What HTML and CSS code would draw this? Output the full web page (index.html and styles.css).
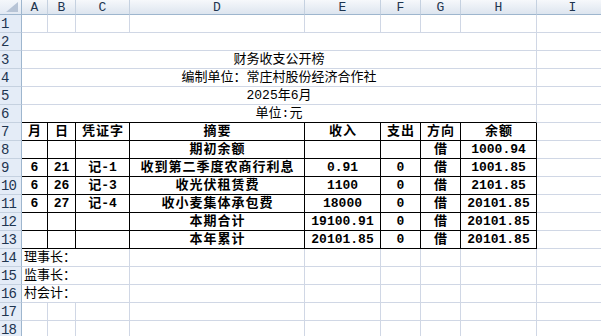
FILE: index.html
```html
<!DOCTYPE html>
<html lang="zh-CN">
<head>
<meta charset="utf-8">
<title>财务收支公开榜</title>
<link rel="stylesheet" href="styles.css">
</head>
<body>
<div class="sheet">
  <!-- column headers -->
  <div class="corner"><svg width="21" height="14" viewBox="0 0 21 14"><polygon points="18,2 18,12 6,12" fill="#b7c4d6"/></svg></div>
  <div class="ch">A</div><div class="ch">B</div><div class="ch">C</div><div class="ch">D</div><div class="ch">E</div><div class="ch">F</div><div class="ch">G</div><div class="ch">H</div><div class="ch">I</div>

  <!-- row 1 -->
  <div class="rh">1</div>
  <div class="c"></div><div class="c"></div><div class="c"></div><div class="c"></div><div class="c"></div><div class="c"></div><div class="c"></div><div class="c"></div><div class="c"></div>

  <!-- rows 2-6 -->
  <div class="rh">2</div><div class="c span8"></div><div class="c"></div>
  <div class="rh">3</div><div class="c span8">财务收支公开榜</div><div class="c"></div>
  <div class="rh">4</div><div class="c span8">编制单位：常庄村股份经济合作社</div><div class="c"></div>
  <div class="rh">5</div><div class="c span8">2025年6月</div><div class="c"></div>
  <div class="rh">6</div><div class="c span8 bb">单位:元</div><div class="c"></div>

  <!-- rows 7-13: table -->
  <div class="rh">7</div>
  <div class="t k">月</div><div class="t k">日</div><div class="t k">凭证字</div><div class="t k">摘要</div><div class="t k">收入</div><div class="t k">支出</div><div class="t k">方向</div><div class="t k">余额</div><div class="c"></div>

  <div class="rh">8</div>
  <div class="t"></div><div class="t"></div><div class="t"></div><div class="t k">期初余额</div><div class="t"></div><div class="t"></div><div class="t k">借</div><div class="t">1000.94</div><div class="c"></div>

  <div class="rh">9</div>
  <div class="t">6</div><div class="t">21</div><div class="t">记-1</div><div class="t k">收到第二季度农商行利息</div><div class="t">0.91</div><div class="t">0</div><div class="t k">借</div><div class="t">1001.85</div><div class="c"></div>

  <div class="rh">10</div>
  <div class="t">6</div><div class="t">26</div><div class="t">记-3</div><div class="t k">收光伏租赁费</div><div class="t">1100</div><div class="t">0</div><div class="t k">借</div><div class="t">2101.85</div><div class="c"></div>

  <div class="rh">11</div>
  <div class="t">6</div><div class="t">27</div><div class="t">记-4</div><div class="t k">收小麦集体承包费</div><div class="t">18000</div><div class="t">0</div><div class="t k">借</div><div class="t">20101.85</div><div class="c"></div>

  <div class="rh">12</div>
  <div class="t"></div><div class="t"></div><div class="t"></div><div class="t k">本期合计</div><div class="t">19100.91</div><div class="t">0</div><div class="t k">借</div><div class="t">20101.85</div><div class="c"></div>

  <div class="rh">13</div>
  <div class="t"></div><div class="t"></div><div class="t"></div><div class="t k">本年累计</div><div class="t">20101.85</div><div class="t">0</div><div class="t k">借</div><div class="t">20101.85</div><div class="c"></div>

  <!-- rows 14-16 -->
  <div class="rh">14</div><div class="c span3 left">理事长：</div><div class="c"></div><div class="c"></div><div class="c"></div><div class="c"></div><div class="c"></div><div class="c"></div>
  <div class="rh">15</div><div class="c span3 left">监事长：</div><div class="c"></div><div class="c"></div><div class="c"></div><div class="c"></div><div class="c"></div><div class="c"></div>
  <div class="rh">16</div><div class="c span3 left">村会计：</div><div class="c"></div><div class="c"></div><div class="c"></div><div class="c"></div><div class="c"></div><div class="c"></div>

  <!-- rows 17-18 -->
  <div class="rh">17</div>
  <div class="c"></div><div class="c"></div><div class="c"></div><div class="c"></div><div class="c"></div><div class="c"></div><div class="c"></div><div class="c"></div><div class="c"></div>
  <div class="rh">18</div>
  <div class="c"></div><div class="c"></div><div class="c"></div><div class="c"></div><div class="c"></div><div class="c"></div><div class="c"></div><div class="c"></div><div class="c"></div>
</div>
</body>
</html>
```

FILE: styles.css
```css
html, body {
  margin: 0;
  padding: 0;
  background: #ffffff;
  overflow: hidden;
}

.sheet {
  display: grid;
  grid-template-columns: 22px 26px 28px 54px 175px 76px 40px 40px 76px 72px;
  grid-template-rows: 15px;
  grid-auto-rows: 18px;
  width: 609px;
  font-family: "Liberation Mono", "Noto Sans CJK SC", monospace;
  font-size: 13px;
  color: #000;
}

.sheet > div {
  box-sizing: border-box;
  display: flex;
  align-items: center;
  justify-content: center;
  line-height: 1;
  white-space: nowrap;
  overflow: hidden;
}

.corner {
  background: linear-gradient(#f4f7fb, #e2e9f3);
  border-right: 1px solid #9eb6ce;
  border-bottom: 1px solid #9eb6ce;
}

.corner svg {
  display: block;
}

.ch {
  background: linear-gradient(#f6f8fb, #dde5ef);
  border-right: 1px solid #c5d1e0;
  border-bottom: 1px solid #9eb6ce;
  color: #1e3550;
  font-family: "Liberation Mono", monospace;
  font-size: 13px;
}

.rh {
  background: #e4ecf7;
  border-right: 1px solid #9eb6ce;
  border-bottom: 1px solid #c5d1e0;
  color: #1e3550;
  font-family: "Liberation Mono", monospace;
  font-size: 14px;
  letter-spacing: -1px;
  justify-content: flex-start !important;
  padding-left: 1px;
}

.c {
  border-right: 1px solid #d0d7e5;
  border-bottom: 1px solid #d0d7e5;
}

.span8 {
  grid-column: span 8;
}

.span3 {
  grid-column: span 3;
}

.left {
  justify-content: flex-start !important;
  padding-left: 2px;
}

.bb {
  border-bottom: 1px solid #000;
}

.t {
  border-right: 1px solid #000;
  border-bottom: 1px solid #000;
  font-weight: 700;
}

.k {
  letter-spacing: 1px;
  padding-left: 1px;
}
```
